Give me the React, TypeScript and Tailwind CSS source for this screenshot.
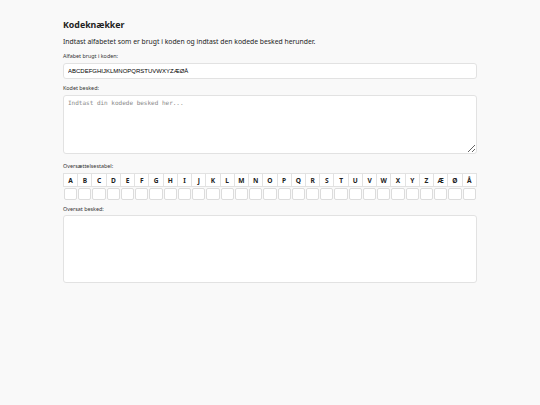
const ALPHABET = "ABCDEFGHIJKLMNOPQRSTUVWXYZÆØÅ".split("");

export default function App() {
  return (
    <div className="min-h-[405px] bg-[#f9f9f9] font-['Noto_Sans',sans-serif] text-[#222]">
      <div className="mx-auto w-[414px] pt-[19px] pb-6">
        <h1 className="text-[8.8px] font-bold leading-[12px] text-[#222]">Kodeknækker</h1>
        <p className="mt-[6px] text-[6.8px] leading-[10px] text-[#222]">
          Indtast alfabetet som er brugt i koden og indtast den kodede besked herunder.
        </p>

        <label className="mt-[6px] block text-[5.4px] leading-[7px] text-[#333]">Alfabet brugt i koden:</label>
        <input
          type="text"
          defaultValue="ABCDEFGHIJKLMNOPQRSTUVWXYZÆØÅ"
          className="mt-[3px] block h-[16px] w-full rounded-[3px] border border-[#e2e2e2] bg-white px-[4px] font-['Liberation_Sans',Arial,sans-serif] text-[6px] text-black outline-none"
        />

        <label className="mt-[6px] block text-[5.4px] leading-[7px] text-[#333]">Kodet besked:</label>
        <textarea
          placeholder="Indtast din kodede besked her..."
          className="mt-[3px] block h-[59px] w-full rounded-[3px] border border-[#e2e2e2] bg-white px-[4px] py-[3px] font-['DejaVu_Sans_Mono',monospace] text-[6px] leading-[8px] text-black outline-none placeholder:text-[#888]"
        />

        <label className="mt-[9px] block text-[5.4px] leading-[7px] text-[#333]">Oversættelsestabel:</label>
        <table className="mt-[3px] w-full table-fixed border-collapse">
          <tbody>
            <tr>
              {ALPHABET.map((c) => (
                <th
                  key={c}
                  className="h-[13px] border border-[#e2e2e2] bg-white p-0 text-center text-[6.6px] font-bold leading-[11px] text-[#222]"
                >
                  {c}
                </th>
              ))}
            </tr>
            <tr>
              {ALPHABET.map((c) => (
                <td key={c} className="h-[13px] p-[0.5px]">
                  <input
                    type="text"
                    className="block h-[12px] w-full rounded-[2px] border border-[#dcdcdc] bg-white text-center text-[6px] outline-none"
                  />
                </td>
              ))}
            </tr>
          </tbody>
        </table>

        <label className="mt-[6px] block text-[5.4px] leading-[7px] text-[#333]">Oversat besked:</label>
        <div className="mt-[2px] h-[68px] w-full rounded-[3px] border border-[#e2e2e2] bg-white" />
      </div>
    </div>
  );
}
